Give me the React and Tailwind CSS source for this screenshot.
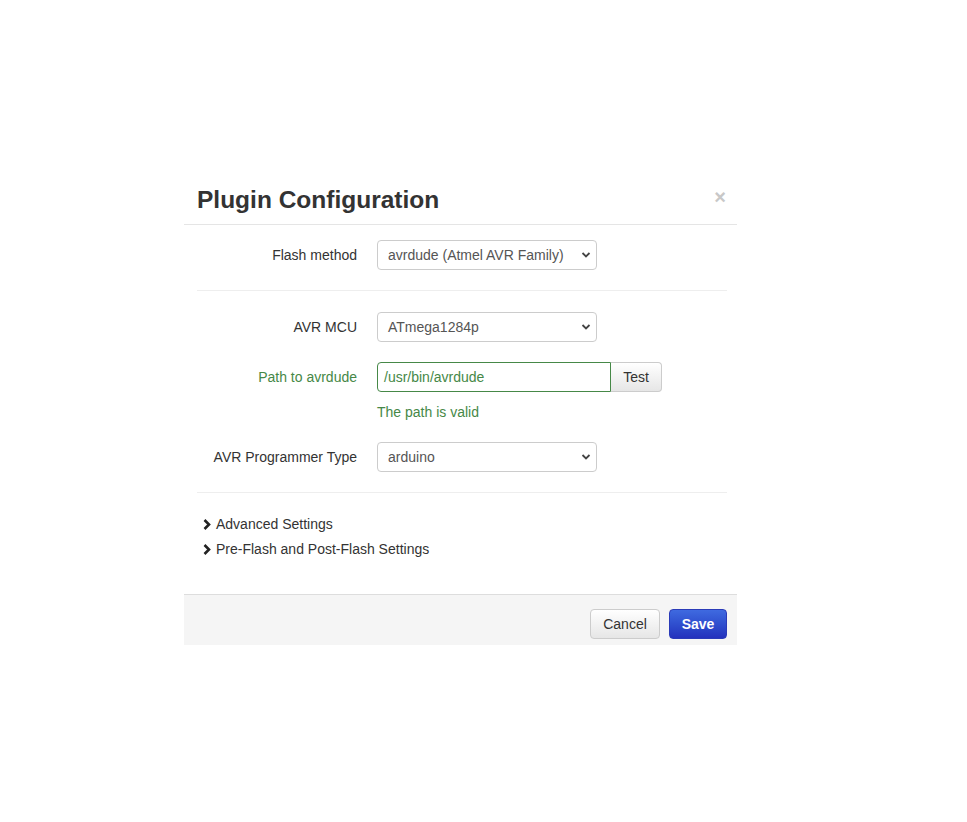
import React from 'react';

const Chevron = () => (
    <svg width="10" height="6" viewBox="0 0 10 6" className="absolute right-[6px] top-[12px] pointer-events-none">
        <path d="M1.5 1 L5 4.5 L8.5 1" fill="none" stroke="#444" strokeWidth="1.8" />
    </svg>
);

const Select = ({ value }) => (
    <div className="relative w-[220px]">
        <div className="h-[30px] border border-[#ccc] rounded-[4px] bg-white pl-[10px] flex items-center text-[#555]">
            {value}
        </div>
        <Chevron />
    </div>
);

const Row = ({ label, children, green }) => (
    <div className="flex">
        <div className={`w-[160px] text-right pt-[5px] leading-[20px] ${green ? 'text-[#468847]' : 'text-[#333]'}`}>{label}</div>
        <div className="ml-[20px]">{children}</div>
    </div>
);

const Toggle = ({ children }) => (
    <div className="flex items-center leading-[20px] h-[20px]">
        <svg width="10" height="11" viewBox="0 0 10 11" className="mr-[4px] ml-[9px]">
            <path d="M2.5 1 L7 5.5 L2.5 10" fill="none" stroke="#222" strokeWidth="2.6" />
        </svg>
        {children}
    </div>
);

export default function App() {
    return (
        <div className="min-h-[822px] bg-white text-[14px] text-[#333]" style={{ fontFamily: '"Liberation Sans", Arial, sans-serif' }}>
            <div className="ml-[184px] pt-[176px] w-[553px]">
                <div className="relative border-b border-[#e5e5e5] pl-[13px] pr-[15px] pt-[9px] pb-[9px]">
                    <h3 className="text-[24.5px] font-bold leading-[30px] text-[#333]">Plugin Configuration</h3>
                    <span className="absolute right-[11px] top-[11px] text-[20px] font-bold text-[#c8c8c8] leading-[20px]">×</span>
                </div>
                <div className="pl-[13px] pr-[10px] pt-[15px] pb-[35px]">
                    <Row label="Flash method">
                        <Select value="avrdude (Atmel AVR Family)" />
                    </Row>
                    <div className="border-t border-[#eee] mt-[20px] mb-[21px]" />
                    <Row label="AVR MCU">
                        <Select value="ATmega1284p" />
                    </Row>
                    <div className="mt-[20px]">
                        <Row label="Path to avrdude" green>
                            <div className="flex">
                                <div className="w-[234px] h-[30px] border border-[#468847] rounded-l-[4px] pl-[6px] flex items-center text-[#468847]">/usr/bin/avrdude</div>
                                <div className="w-[51px] h-[30px] border border-[#ccc] border-l-0 rounded-r-[4px] bg-gradient-to-b from-white to-[#e6e6e6] flex items-center justify-center text-[#333]">Test</div>
                            </div>
                            <div className="text-[#468847] leading-[20px] mt-[10px]">The path is valid</div>
                        </Row>
                    </div>
                    <div className="mt-[20px]">
                        <Row label="AVR Programmer Type">
                            <Select value="arduino" />
                        </Row>
                    </div>
                    <div className="border-t border-[#eee] mt-[20px] mb-[21px]" />
                    <div className="flex flex-col gap-[5px] -ml-[4px]">
                        <Toggle>Advanced Settings</Toggle>
                        <Toggle>Pre-Flash and Post-Flash Settings</Toggle>
                    </div>
                </div>
                <div className="bg-[#f5f5f5] border-t border-[#ddd] pt-[14px] pb-[6px] pr-[10px] flex justify-end gap-[9px]">
                    <button className="w-[70px] h-[30px] border border-[#ccc] rounded-[4px] bg-gradient-to-b from-white to-[#e6e6e6] text-[#333] text-[14px]">Cancel</button>
                    <button className="w-[58px] h-[30px] border border-[#2a3bb8] rounded-[4px] bg-gradient-to-b from-[#3f6ae0] to-[#2431bd] text-white font-bold text-[14px]">Save</button>
                </div>
            </div>
        </div>
    );
}
